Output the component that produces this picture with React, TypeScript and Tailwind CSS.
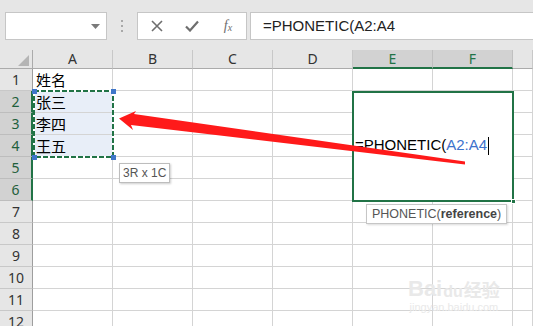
import React from 'react';

const COLS = ['A', 'B', 'C', 'D', 'E', 'F', ''];
const ROWS = [1, 2, 3, 4, 5, 6, 7, 8, 9, 10, 11, 12];
const DATA: Record<string, string> = { A1: '姓名', A2: '张三', A3: '李四', A4: '王五' };

export default function App() {
  return (
    <div className="relative w-[533px] h-[326px] overflow-hidden bg-white font-['Liberation_Sans','Noto_Sans_CJK_SC',sans-serif]">
      {/* Toolbar */}
      <div className="h-[50px] bg-[#e6e6e6] flex items-start pt-[12px] pl-[5px]">
        <div className="w-[102px] h-[28px] bg-white border border-[#c6c6c6] flex items-center justify-end pr-[6px]">
          <svg width="9" height="5" viewBox="0 0 9 5"><path d="M0 0h9L4.5 5z" fill="#7a7a7a" /></svg>
        </div>
        <div className="w-[30px] h-[28px] flex flex-col items-center justify-center gap-[3px]">
          <div className="w-[2px] h-[2px] bg-[#a8a8a8]" />
          <div className="w-[2px] h-[2px] bg-[#a8a8a8]" />
          <div className="w-[2px] h-[2px] bg-[#a8a8a8]" />
        </div>
        <div className="w-[110px] h-[28px] bg-white border border-[#c6c6c6] flex items-center">
          <div className="w-[36px] flex justify-center pl-[2px]">
            <svg width="12" height="12" viewBox="0 0 12 12"><path d="M1 1L11 11M11 1L1 11" stroke="#6e6e6e" strokeWidth="1.6" /></svg>
          </div>
          <div className="w-[36px] flex justify-center">
            <svg width="14" height="12" viewBox="0 0 14 12"><path d="M1 6.5L5 10.5L13 1.5" stroke="#6e6e6e" strokeWidth="2.2" fill="none" /></svg>
          </div>
          <div className="w-[36px] flex justify-center text-[14px] italic text-[#6e6e6e] font-['Liberation_Serif',serif] leading-none">
            <span>f</span><span className="text-[10px] mt-[4px]">x</span>
          </div>
        </div>
        <div className="ml-[3px] flex-1 h-[28px] bg-white border-l border-y border-[#c6c6c6] flex items-center pl-[12px] text-[15px] text-[#222]">
          =PHONETIC(A2:A4
        </div>
      </div>

      {/* Grid */}
      <div className="grid grid-cols-[33px_repeat(6,80px)_1fr] grid-rows-[19px_repeat(12,22px)]">
        {/* Header row */}
        <div className="bg-[#e6e6e6] border-r border-b border-[#ababab] relative">
          <svg className="absolute right-[3px] bottom-[2px]" width="11" height="11" viewBox="0 0 11 11"><path d="M11 0V11H0z" fill="#b5b5b5" /></svg>
        </div>
        {COLS.map((c) => {
          const sel = c === 'E' || c === 'F';
          return (
            <div
              key={c || 'G'}
              className={
                sel
                  ? 'bg-[#d2d2d2] border-r border-r-[#c0c0c0] border-b-2 border-b-[#217346] flex items-center justify-center text-[14px] text-[#217346] font-["Noto_Sans",sans-serif] leading-none pt-[1px]'
                  : 'bg-[#e6e6e6] border-r border-r-[#c8c8c8] border-b border-b-[#ababab] flex items-center justify-center text-[14px] text-[#333] font-["Noto_Sans",sans-serif] leading-none'
              }
            >
              {c}
            </div>
          );
        })}

        {ROWS.map((r) => {
          const sel = r >= 2 && r <= 6;
          return (
            <React.Fragment key={r}>
              <div
                className={
                  sel
                    ? 'bg-[#d2d2d2] border-r-2 border-r-[#217346] border-b border-b-[#bdbdbd] flex items-center justify-center text-[14px] text-[#1f5f3c] font-["Noto_Sans",sans-serif] leading-none'
                    : 'bg-[#e6e6e6] border-r border-r-[#9e9e9e] border-b border-b-[#c8c8c8] flex items-center justify-center text-[14px] text-[#333] font-["Noto_Sans",sans-serif] leading-none'
                }
              >
                {r}
              </div>
              {COLS.map((c, ci) => {
                if ((c === 'E' || c === 'F') && sel) {
                  if (c === 'E' && r === 2) {
                    return (
                      <div key={c + r} className="col-span-2 row-span-5 relative bg-white border-r border-b border-[#d4d4d4] flex items-center pl-[2px] text-[15px] text-black">
                        <span>=PHONETIC(</span>
                        <span className="text-[#3d72cc]">A2:A4</span>
                        <span className="ml-[1px] w-[1px] h-[18px] bg-black" />
                        <div className="absolute -left-[1px] -top-[0px] -right-[2px] -bottom-[2px] border-2 border-[#217346]" />
                        <div className="absolute -right-[4px] -bottom-[4px] w-[5px] h-[5px] bg-[#217346] border border-white" />
                      </div>
                    );
                  }
                  return null;
                }
                const key = c + r;
                const inSel = c === 'A' && r >= 2 && r <= 4;
                return (
                  <div
                    key={key + ci}
                    className={
                      (inSel ? 'bg-[#e8eef8] ' : 'bg-white ') +
                      "border-r border-b border-[#d4d4d4] flex items-center pl-[3px] text-[15px] text-black font-['Noto_Sans_CJK_SC',sans-serif] leading-none"
                    }
                  >
                    {DATA[key] || ''}
                  </div>
                );
              })}
            </React.Fragment>
          );
        })}
      </div>

      {/* Copy selection marching ants */}
      <svg className="absolute left-[32px] top-[89px]" width="84" height="71" viewBox="0 0 84 71">
        <rect x="2" y="2" width="79" height="66" fill="none" stroke="#ffffff" strokeWidth="2" />
        <rect x="2" y="2" width="79" height="66" fill="none" stroke="#217346" strokeWidth="2" strokeDasharray="5 2" />
        <rect x="0" y="0" width="5" height="5" fill="#3f76c9" />
        <rect x="79" y="0" width="5" height="5" fill="#3f76c9" />
        <rect x="0" y="66" width="5" height="5" fill="#3f76c9" />
        <rect x="79" y="66" width="5" height="5" fill="#3f76c9" />
      </svg>

      {/* Red arrow */}
      <svg className="absolute left-0 top-0 pointer-events-none" width="533" height="326" viewBox="0 0 533 326">
        <polygon
          points="119,118.5 136,111 134,114 465,161.5 465,164.5 131,125 133,130"
          fill="#ff1a1a"
        />
      </svg>

      {/* Tooltips */}
      <div className="absolute left-[119px] top-[163px] h-[20px] px-[3px] bg-white border border-[#bdbdbd] shadow-[1px_1px_2px_rgba(0,0,0,0.2)] flex items-center text-[12px] text-[#555] font-['Liberation_Sans',sans-serif]">
        3R x 1C
      </div>
      <div className="absolute left-[366px] top-[204px] h-[20px] px-[5px] bg-white border border-[#c6c6c6] shadow-[1px_1px_2px_rgba(0,0,0,0.15)] flex items-center text-[12.5px] text-[#555] font-['Liberation_Sans',sans-serif]">
        PHONETIC(<span className="font-bold text-[#444]">reference</span>)
      </div>

      {/* Watermark */}
      <div className="absolute left-[408px] top-[278px] flex flex-col items-center text-[#e9e9e9] leading-none pointer-events-none">
        <div className="flex items-end text-[22px] font-bold font-['Liberation_Sans','Noto_Sans_CJK_SC',sans-serif]">
          <span>Bai</span>
          <span className="text-[16px] mx-[1px]">du</span>
          <span className="text-[18px]">经验</span>
        </div>
        <div className="text-[11px] mt-[2px] font-['Liberation_Sans',sans-serif]">jingyan.baidu.com</div>
      </div>
    </div>
  );
}
